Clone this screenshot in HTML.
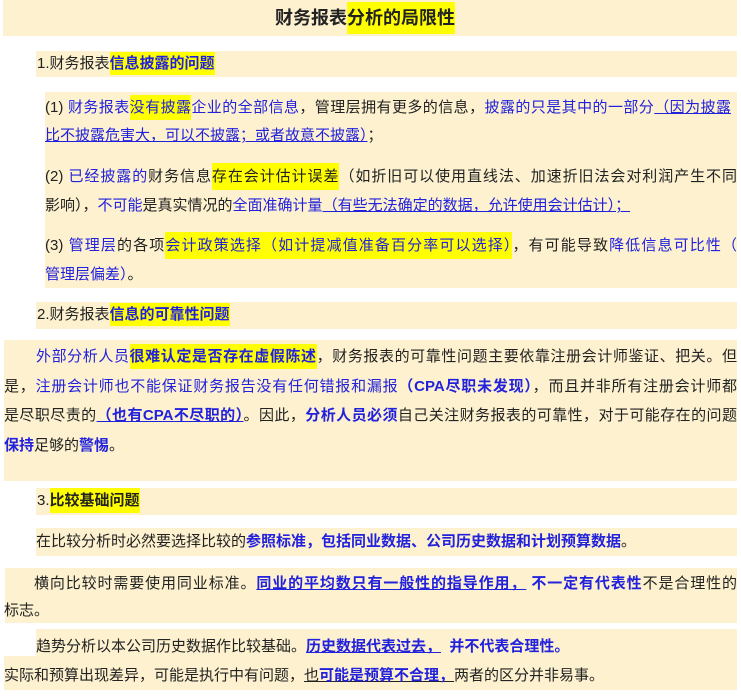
<!DOCTYPE html>
<html><head><meta charset="utf-8"><style>
body{margin:0;width:741px;height:698px;background:#fff;position:relative;overflow:hidden;font-family:"Liberation Sans","Noto Sans CJK SC",sans-serif;color:#222;}
.b{position:absolute;background:#fdf1cf;}
.l{position:absolute;white-space:nowrap;font-size:15px;line-height:20px;letter-spacing:0;}
.j{white-space:normal;text-align:justify;text-align-last:justify;overflow:visible;height:20px}
.u{color:#2222dd}
.y{background:#ffff00}
.k{font-weight:bold}
.ul{text-decoration:underline}
</style></head><body>
<div class="b" style="left:3px;top:0;width:734px;height:36px"></div>
<div class="l k" style="left:275px;top:6px;font-size:18px;line-height:24px">财务报表<span class="y" style="padding:6px 0">分析的局限性</span></div>

<div class="b" style="left:36px;top:51px;width:701px;height:26px"></div>
<div class="l" style="left:37px;top:54px">1.财务报表<span class="u y k" style="padding:3px 0">信息披露的问题</span></div>

<div class="b" style="left:45px;top:92px;width:692px;height:196px"></div>
<div class="l j" style="left:45px;top:98px;width:686px">(1) <span class="u">财务报表<span class="y" style="padding:4px 0">没有披露</span>企业的全部信息</span>，管理层拥有更多的信息，<span class="u">披露的只是其中的一部分<span class="ul">（因为披露</span></span></div>
<div class="l" style="left:45px;top:126px"><span class="u ul">比不披露危害大，可以不披露；或者故意不披露）</span>；</div>
<div class="l j" style="left:45px;top:167px;width:692px">(2) <span class="u">已经披露的</span>财务信息<span class="y" style="padding:5px 0">存在会计估计误差</span>（如折旧可以使用直线法、加速折旧法会对利润产生不同</div>
<div class="l" style="left:45px;top:196px">影响），<span class="u">不可能</span>是真实情况的<span class="u">全面准确计量<span class="ul">（有些无法确定的数据，允许使用会计估计）；</span></span></div>
<div class="l j" style="left:45px;top:236px;width:692px">(3) <span class="u">管理层</span>的各项<span class="y u" style="padding:5px 0">会计政策选择（如计提减值准备百分率可以选择）</span>，有可能导致<span class="u">降低信息可比性（</span></div>
<div class="l" style="left:45px;top:265px"><span class="u">管理层偏差）</span>。</div>

<div class="b" style="left:36px;top:302px;width:701px;height:27px"></div>
<div class="l" style="left:37px;top:305px">2.财务报表<span class="u y k" style="padding:3px 0">信息的可靠性问题</span></div>

<div class="b" style="left:4px;top:340px;width:733px;height:141px"></div>
<div class="l j" style="left:36px;top:347px;width:701px"><span class="u">外部分析人员</span><span class="u y k" style="padding:4px 0">很难认定是否存在虚假陈述</span>，财务报表的可靠性问题主要依靠注册会计师鉴证、把关。但</div>
<div class="l j" style="left:4px;top:377px;width:733px">是，<span class="u">注册会计师也不能保证财务报告没有任何错报和漏报</span><span class="u k">（CPA尽职未发现）</span>，而且并非所有注册会计师都</div>
<div class="l j" style="left:4px;top:406px;width:733px">是尽职尽责的<span class="u k ul">（也有CPA不尽职的）</span>。因此，<span class="u k">分析人员必须</span>自己关注财务报表的可靠性，对于可能存在的问题</div>
<div class="l" style="left:4px;top:436px"><span class="u k">保持</span>足够的<span class="u k">警惕</span>。</div>

<div class="b" style="left:36px;top:488px;width:701px;height:27px"></div>
<div class="l" style="left:37px;top:491px">3.<span class="k y" style="padding:4px 0">比较基础问题</span></div>

<div class="b" style="left:36px;top:528px;width:701px;height:28px"></div>
<div class="l" style="left:36px;top:532px">在比较分析时必然要选择比较的<span class="u k">参照标准，包括同业数据、公司历史数据和计划预算数据</span>。</div>

<div class="b" style="left:5px;top:568px;width:732px;height:55px"></div>
<div class="l j" style="left:34px;top:574px;width:703px">横向比较时需要使用同业标准。<span class="u k ul">同业的平均数只有一般性的指导作用，</span> <span class="u k">不一定有代表性</span>不是合理性的</div>
<div class="l" style="left:4px;top:601px">标志。</div>

<div class="b" style="left:36px;top:629px;width:701px;height:28px"></div>
<div class="b" style="left:4px;top:656px;width:733px;height:34px"></div>
<div class="l" style="left:36px;top:637px">趋势分析以本公司历史数据作比较基础。<span class="u k ul">历史数据代表过去，</span>&nbsp;&nbsp;<span class="u k">并不代表合理性。</span></div>
<div class="l" style="left:4px;top:666px">实际和预算出现差异，可能是执行中有问题，<span class="ul">也<span class="u k">可能是预算不合理，</span></span>两者的区分并非易事。</div>
</body></html>
